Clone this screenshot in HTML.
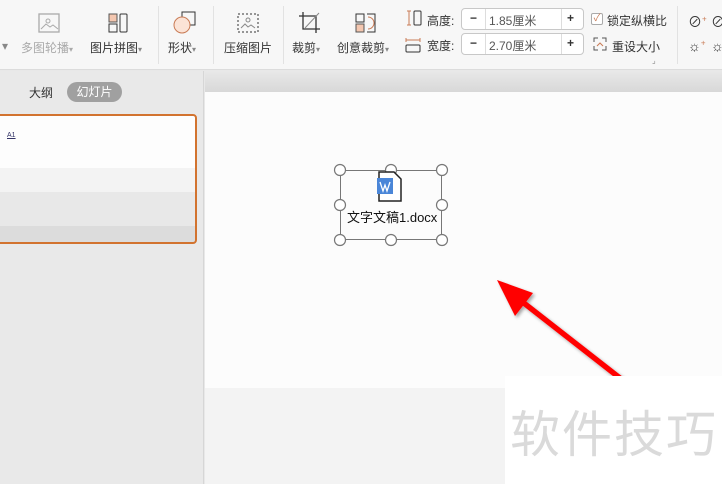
<!DOCTYPE html>
<html><head><meta charset="utf-8"><style>
*{margin:0;padding:0;box-sizing:border-box}
body{width:722px;height:484px;overflow:hidden;position:relative;background:#e8e8e8;font-family:"Liberation Sans","Noto Sans CJK SC",sans-serif;font-size:12px;color:#333}
.abs{position:absolute}
.tb{left:0;top:0;width:722px;height:70px;background:#f7f7f7;border-bottom:1px solid #dcdcdc}
.lbl{position:absolute;top:39px;font-size:12px;color:#333;white-space:nowrap}
.sep{position:absolute;top:6px;width:1px;height:58px;background:#e2e2e2}
.box{position:absolute;height:22px;border:1px solid #c8c8c8;border-radius:4px;background:#fff}
</style></head><body>
<div class="abs tb">
 <div class="lbl" style="left:2px;color:#888">▾</div>
 <svg class="abs" style="left:36px;top:12px" width="26" height="22"><rect x="3" y="2" width="20" height="18" fill="none" stroke="#aaa" stroke-width="1.3"/><circle cx="12" cy="9" r="2" fill="none" stroke="#aaa"/><path d="M5 17l5-5 4 3 3-2 5 4" fill="none" stroke="#aaa"/></svg>
 <div class="lbl" style="left:21px;color:#aaa">多图轮播<span style="font-size:8px">▾</span></div>
 <svg class="abs" style="left:107px;top:12px" width="22" height="22"><rect x="2" y="2" width="8" height="8" fill="#f4c7b0" stroke="#555"/><rect x="2" y="12" width="8" height="8" fill="none" stroke="#333"/><rect x="13" y="2" width="7" height="18" rx="1" fill="none" stroke="#333"/></svg>
 <div class="lbl" style="left:90px">图片拼图<span style="font-size:8px;color:#888">▾</span></div>
 <div class="sep" style="left:158px"></div>
 <svg class="abs" style="left:172px;top:10px" width="26" height="26"><rect x="10" y="2" width="13" height="13" fill="none" stroke="#333"/><circle cx="10" cy="15" r="8" fill="#fbe3d6" stroke="#c97b55"/></svg>
 <div class="lbl" style="left:168px">形状<span style="font-size:8px;color:#888">▾</span></div>
 <div class="sep" style="left:213px"></div>
 <svg class="abs" style="left:236px;top:12px" width="24" height="22"><rect x="2" y="2" width="20" height="18" fill="none" stroke="#333" stroke-dasharray="2 2"/><circle cx="12" cy="8" r="2" fill="none" stroke="#888"/><path d="M5 16l4-4 3 3 3-2 4 3" fill="none" stroke="#888"/></svg>
 <div class="lbl" style="left:224px">压缩图片</div>
 <div class="sep" style="left:283px"></div>
 <svg class="abs" style="left:297px;top:10px" width="26" height="26"><path d="M6 2v17h17M2 6h17v17" fill="none" stroke="#333" stroke-width="1.3"/><path d="M8 18L22 3" stroke="#888"/></svg>
 <div class="lbl" style="left:292px">裁剪<span style="font-size:8px;color:#888">▾</span></div>
 <svg class="abs" style="left:354px;top:12px" width="24" height="22"><rect x="2" y="2" width="8" height="8" fill="none" stroke="#333"/><rect x="2" y="12" width="8" height="8" fill="#f4c7b0" stroke="#555"/><path d="M13 2h8v18h-8" fill="none" stroke="#333"/><path d="M14 5a6 6 0 0 1 0 12" fill="none" stroke="#c97b55"/></svg>
 <div class="lbl" style="left:337px">创意裁剪<span style="font-size:8px;color:#888">▾</span></div>
 <svg class="abs" style="left:405px;top:9px" width="18" height="18"><path d="M4 2v14M2 2h4M2 16h4" stroke="#c97b55"/><rect x="9" y="2" width="7" height="14" rx="1" fill="none" stroke="#333"/></svg>
 <div class="abs" style="left:427px;top:12px">高度:</div>
 <svg class="abs" style="left:404px;top:36px" width="18" height="18"><path d="M2 4h14M2 2v4M16 2v4" stroke="#c97b55"/><rect x="2" y="9" width="14" height="7" rx="1" fill="none" stroke="#333"/></svg>
 <div class="abs" style="left:427px;top:37px">宽度:</div>
 <div class="box" style="left:461px;top:8px;width:123px"><span class="abs" style="left:8px;top:2px;font-weight:bold">−</span><span class="abs" style="left:23px;top:0;height:20px;border-left:1px solid #ddd"></span><span class="abs" style="left:27px;top:3px;color:#555">1.85厘米</span><span class="abs" style="left:99px;top:0;height:20px;border-left:1px solid #ddd"></span><span class="abs" style="left:105px;top:2px;font-weight:bold">+</span></div>
 <div class="box" style="left:461px;top:33px;width:123px"><span class="abs" style="left:8px;top:2px;font-weight:bold">−</span><span class="abs" style="left:23px;top:0;height:20px;border-left:1px solid #ddd"></span><span class="abs" style="left:27px;top:3px;color:#555">2.70厘米</span><span class="abs" style="left:99px;top:0;height:20px;border-left:1px solid #ddd"></span><span class="abs" style="left:105px;top:2px;font-weight:bold">+</span></div>
 <div class="abs" style="left:591px;top:13px;width:12px;height:12px;border:1px solid #aaa;border-radius:2px;background:#fff;color:#c97b55;font-size:10px;line-height:10px;text-align:center">✓</div>
 <div class="abs" style="left:607px;top:12px">锁定纵横比</div>
 <svg class="abs" style="left:593px;top:37px" width="14" height="14"><path d="M1 5V1h4M9 1h4v4M13 9v4H9M5 13H1V9" fill="none" stroke="#555"/><path d="M4 9l3-3 3 3" fill="none" stroke="#c97b55"/></svg>
 <div class="abs" style="left:612px;top:38px">重设大小</div>
 <div class="abs" style="left:652px;top:56px;font-size:8px;color:#888">⌟</div>
 <div class="sep" style="left:677px"></div>
 <div class="abs" style="left:688px;top:12px;font-size:14px">⊘<sup style="color:#c97b55;font-size:8px">+</sup></div>
 <div class="abs" style="left:711px;top:12px;font-size:14px">⊘</div>
 <div class="abs" style="left:688px;top:38px;font-size:14px">☼<sup style="color:#c97b55;font-size:8px">+</sup></div>
 <div class="abs" style="left:711px;top:38px;font-size:14px">☼</div>
</div>
<div class="abs" style="left:0;top:71px;width:204px;height:413px;background:#e9e9e9;border-right:1px solid #d6d6d6"></div>
<div class="abs" style="left:29px;top:84px;font-size:12px">大纲</div>
<div class="abs" style="left:67px;top:82px;width:55px;height:20px;border-radius:10px;background:#a0a0a0;color:#fff;text-align:center;line-height:20px">幻灯片</div>
<div class="abs" style="left:-4px;top:114px;width:201px;height:130px;border:2px solid #d2732f;border-radius:4px;background:linear-gradient(#fdfdfd 0,#fdfdfd 52px,#f3f3f3 52px,#f3f3f3 76px,#e8e8e8 76px,#e8e8e8 110px,#dcdcdc 110px)">
 <div class="abs" style="left:9px;top:16px;font-size:7px;color:#336;text-decoration:underline">A1</div></div>
<div class="abs" style="left:205px;top:71px;width:517px;height:21px;background:linear-gradient(#e8e8e8,#d8d8d8)"></div>
<div class="abs" style="left:205px;top:92px;width:517px;height:296px;background:#fcfcfc"></div>
<div class="abs" style="left:205px;top:388px;width:517px;height:96px;background:#f3f3f3"></div>
<div class="abs" style="left:340px;top:170px;width:102px;height:70px;border:1px solid #777"></div>
<svg class="abs" style="left:333px;top:163px" width="116" height="84">
 <g fill="#fff" stroke="#777" stroke-width="1.2">
 <circle cx="7" cy="7" r="5.5"/><circle cx="58" cy="7" r="5.5"/><circle cx="109" cy="7" r="5.5"/>
 <circle cx="7" cy="42" r="5.5"/><circle cx="109" cy="42" r="5.5"/>
 <circle cx="7" cy="77" r="5.5"/><circle cx="58" cy="77" r="5.5"/><circle cx="109" cy="77" r="5.5"/></g></svg>
<svg class="abs" style="left:377px;top:170px" width="28" height="34"><path d="M2 2h15l7 7v22H2z" fill="#fff" stroke="#222" stroke-width="1.5"/><rect x="0" y="8" width="16" height="16" fill="#4a86d8"/><path d="M3 12l3 9 2-6 2 6 3-9" fill="none" stroke="#fff" stroke-width="1.3"/></svg>
<div class="abs" style="left:347px;top:207px;font-size:13px;color:#111">文字文稿1.docx</div>
<svg class="abs" style="left:480px;top:270px" width="160" height="120">
 <defs><filter id="s"><feDropShadow dx="2" dy="2" stdDeviation="1.5" flood-color="#000" flood-opacity=".35"/></filter></defs>
 <g filter="url(#s)" fill="#f00"><path d="M40 30L145 112" stroke="#f00" stroke-width="5.5"/><path d="M17 10L53 23L35 46z"/></g></svg>
<div class="abs" style="left:505px;top:376px;width:217px;height:108px;background:#fff"></div>
<div class="abs" style="left:510px;top:395px;font-size:50px;color:#dadada;font-family:'Noto Sans CJK SC',sans-serif;letter-spacing:2px">软件技巧</div>
</body></html>
